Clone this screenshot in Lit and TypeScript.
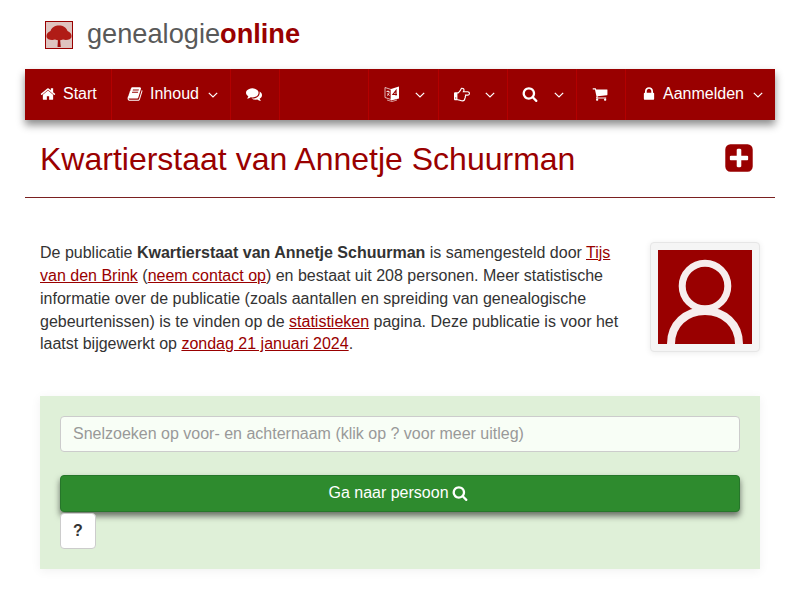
import { LitElement, html, css } from "lit";
import { customElement } from "lit/decorators.js";

const P = {
  home: "M1472 992v480q0 26-19 45t-45 19h-384v-384h-256v384h-384q-26 0-45-19t-19-45v-480q0-1 .5-3t.5-3l575-474 575 474q1 2 1 6zm223-69l-62 74q-8 9-21 11h-3q-13 0-21-7l-692-577-692 577q-12 8-24 7-13-2-21-11l-62-74q-8-10-7-23.5t11-21.5l719-599q32-26 76-26t76 26l244 204v-195q0-14 9-23t23-9h192q14 0 23 9t9 23v408l219 182q10 8 11 21.5t-7 23.5z",
  search: "M1216 832q0-185-131.500-316.500t-316.500-131.500-316.500 131.500-131.500 316.500 131.500 316.500 316.500 131.500 316.500-131.500 131.500-316.500zm512 832q0 52-38 90t-90 38q-54 0-90-38l-343-342q-179 124-399 124-143 0-273.500-55.500t-225-150-150-225-55.500-273.500 55.500-273.500 150-225 225-150 273.500-55.500 273.500 55.500 225 150 150 225 55.500 273.500q0 220-124 399l343 343q37 37 37 90z",
  lock: "M640 768h512v-192q0-106-75-181t-181-75-181 75-75 181v192zm832 96v576q0 40-28 68t-68 28h-960q-40 0-68-28t-28-68v-576q0-40 28-68t68-28h32v-192q0-184 132-316t316-132 316 132 132 316v192h32q40 0 68 28t28 68z",
  cart: "M704 1536q0 52-38 90t-90 38-90-38-38-90 38-90 90-38 90 38 38 90zm896 0q0 52-38 90t-90 38-90-38-38-90 38-90 90-38 90 38 38 90zm128-1088v512q0 24-16.500 42.500t-40.500 21.500l-1044 122q13 60 13 70 0 16-24 64h920q26 0 45 19t19 45-19 45-45 19h-1024q-26 0-45-19t-19-45q0-11 8-31.500t16-36 21.500-40 15.500-29.500l-177-823h-204q-26 0-45-19t-19-45 19-45 45-19h256q16 0 28.500 6.500t19.500 15.500 13 24.500 8 26 5.500 29.500 4.500 26h1201q26 0 45 19t19 45z",
  comments: "M1408 768q0 139-94 257t-256.500 186.500-353.500 68.500q-86 0-176-16-124 88-278 128-36 9-86 16h-3q-11 0-20.500-8t-11.500-21q-1-3-1-6.500t.5-6.500 2-6l2.500-5 3.500-5.500 4-5 4.500-5 4-4.500q5-6 23-25t26-29.500 22.500-29 25-38.500 20.500-44q-124-72-195-177t-71-224q0-139 94-257t256.500-186.500 353.500-68.500 353.500 68.500 256.500 186.500 94 257zm384 256q0 120-71 224.500t-195 176.500q10 24 20.500 44t25 38.500 22.500 29 26 29.500 23 25q1 1 4 4.500t4.500 5 4 5 3.500 5.500l2.500 5 2 6 .5 6.500-1 6.500q-3 14-13 22t-22 7q-50-7-86-16-154-40-278-128-90 16-176 16-271 0-472-132 58 4 88 4 161 0 309-45t264-129q125-92 192-212t67-254q0-77-23-152 129 71 204 178t75 230z",
  book: "M1703 478q40 57 18 129l-275 906q-19 64-76.500 107.500t-122.500 43.500h-923q-77 0-148.500-53.500t-99.500-131.500q-24-67-2-127 0-4 3-27t4-37q1-8-3-21.500t-3-19.500q2-11 8-21t16.500-23.500 16.500-23.500q23-38 45-91.500t30-91.500q3-10 .5-30t-.5-28q3-11 17-28t17-23q21-36 42-92t25-90q1-9-2.500-32t.5-28q4-13 22-30.500t22-22.500q19-26 42.500-84.500t27.500-96.500q1-8-3-25.500t-2-26.500q2-8 9-18t18-23 17-21q8-12 16.500-30.500t15-35 16-36 19.500-32 26.500-23.500 36-11.500 47.500 5.500l-1 3q38-9 51-9h761q74 0 114 56t18 130l-274 906q-36 119-71.500 153.500t-128.500 34.500h-869q-27 0-38 15-11 16-1 43 24 70 144 70h923q29 0 56-15.500t35-41.500l300-987q7-22 5-57 38 15 59 43zm-1064 2q-4 13 2 22.500t20 9.500h608q13 0 25.500-9.500t16.500-22.500l21-64q4-13-2-22.500t-20-9.500h-608q-13 0-25.500 9.500t-16.500 22.500zm-83 256q-4 13 2 22.500t20 9.500h608q13 0 25.500-9.500t16.500-22.500l21-64q4-13-2-22.500t-20-9.500h-608q-13 0-25.500 9.500t-16.500 22.500z",
  hand: "M256 1344q0-26-19-45t-45-19-45 19-19 45 19 45 45 19 45-19 19-45zm1408-512q0-51-39-89.500t-89-38.500h-576q0-20 15-48.500t33-55 33-68 15-84.500q0-67-44.500-97.500t-115.500-30.500q-24 0-90 139-24 44-37 65-40 64-112 145-71 81-101 106-69 57-140 57h-32v640h32q72 0 167 32t193.500 64 179.500 32q189 0 189-167 0-26-5-56 30-16 47.500-52.500t17.500-73.500-18-69q53-50 53-119 0-25-10-55.500t-25-47.500h331q52 0 90-38t38-90zm128-1q0 105-76 181t-181 76h-169q-4 62-37 119 3 21 3 43 0 101-60 178 1 139-85 219.500t-227 80.500q-133 0-322-69-164-59-223-59h-288q-53 0-90.500-37.500t-37.500-90.500v-640q0-53 37.500-90.500t90.500-37.500h288q10 0 21.500-4.500t23.500-14 22.500-18 24-22.500 20.500-21.500 19-21.500 14-17q65-74 100-129 13-21 33-62t37-72 40.500-63 55-49.500 69.500-17.500q125 0 206.500 67t81.500 189q0 68-22 128h374q104 0 180 76t76 179z",
  plus: "M1408 960v-128q0-26-19-45t-45-19h-320v-320q0-26-19-45t-45-19h-128q-26 0-45 19t-19 45v320h-320q-26 0-45 19t-19 45v128q0 26 19 45t45 19h320v320q0 26 19 45t45 19h128q26 0 45-19t19-45v-320h320q26 0 45-19t19-45zm256-544v960q0 119-84.500 203.500t-203.500 84.500h-960q-119 0-203.500-84.500t-84.500-203.500v-960q0-119 84.500-203.500t203.500-84.500h960q119 0 203.500 84.500t84.500 203.500z",
};

const fa = (d: string, size: number, cls = "") => html`<svg class="fa ${cls}" width=${size} height=${size} viewBox="0 0 1792 1792" fill="currentColor"><path d=${d}></path></svg>`;
const chev = (cls = "") => html`<svg class="chev ${cls}" width="10" height="6" viewBox="0 0 10 6" fill="none" stroke="currentColor" stroke-width="1.2"><path d="M.8.8 5 5 9.200.8"></path></svg>`;

@customElement("app-root")
export class AppRoot extends LitElement {
  static styles = css`
    :host { display: block; width: 800px; height: 600px; overflow: hidden; background: #fff;
      font-family: "Liberation Sans", Arial, sans-serif; font-size: 16px; line-height: 22.857px; color: #333; }
    a { color: #990000; }
    .wrap { padding: 0 25px; }
    .brand { height: 69px; display: flex; align-items: center; padding-left: 20px; box-sizing: border-box; }
    .logo { width: 26px; height: 26px; border: 1px solid #990000; display: block; flex: none; }
    .brandtext { margin: -2px 0 0 14px; font-size: 27.2px; line-height: 32px; color: #595959; }
    .brandtext b { color: #990000; }
    nav { height: 51px; background: #990000; display: flex; color: #fff; box-shadow: 0 5px 8px rgba(0,0,0,.45); }
    .it { display: flex; align-items: center; box-sizing: border-box; padding-left: 15px; border-right: 1px solid #b30000; gap: 7px; white-space: nowrap; }
    .it.last { border-right: none; }
    .w87 { width: 87px; } .w119 { width: 119px; } .w49 { width: 49px; } .w70 { width: 70px; } .w69 { width: 69px; } .w149 { width: 149px; }
    .spacer { flex: 1; border-right: 1px solid #b30000; }
    .fa { display: block; flex: none; }
    .it .fa { margin-top: -2px; }
    .it .lock { margin: -2px -1px 0 0; }
    .it .find { margin-left: -1px; margin-right: 1px; }
    .chev { display: block; flex: none; margin-left: 2px; }
    .chev.far { margin-left: 8px; }
    .titlebar { height: 77px; padding: 0 15px; display: flex; align-items: center; justify-content: space-between; border-bottom: 1px solid #7a2020; }
    h1 { margin: 0; font-size: 32px; line-height: 40px; font-weight: 400; color: #990000; }
    .plus { color: #990000; margin-right: 5px; margin-top: -2px; }
    .intro { display: flex; padding: 44px 15px 0; gap: 26px; height: 198px; box-sizing: border-box; }
    .intro p { margin: 0; flex: 1; }
    .thumb { flex: none; width: 94px; height: 94px; padding: 7px; background: #f5f5f5; border: 1px solid #e6e6e6; border-radius: 4px; box-shadow: 0 1px 6px rgba(0,0,0,.08); align-self: flex-start; }
    .thumb svg { display: block; }
    .search { margin: 0 15px; height: 173px; box-sizing: border-box; padding: 20px; background: #dff0d8; box-shadow: 0 2px 10px rgba(0,0,0,.06); }
    .input { height: 36px; box-sizing: border-box; border: 1px solid #ccc; border-radius: 4px; background: #f8fef6; color: #999; padding: 0 12px; display: flex; align-items: center; }
    .go { margin-top: 23px; height: 37px; background: #2e8b2e; border: 1px solid #26762a; box-sizing: border-box; border-radius: 4px; color: #fff; display: flex; align-items: center; justify-content: center; gap: 3px; padding-right: 4px; box-shadow: 0 4px 6px rgba(0,0,0,.55); }
    .go .fa { margin-top: -2px; }
    .q { margin-top: 1px; width: 36px; height: 36px; box-sizing: border-box; background: #fff; border: 1px solid #ccc; border-radius: 4px; display: flex; align-items: center; justify-content: center; font-weight: 700; }
  `;

  render() {
    return html`<div class="wrap">
      <div class="brand">
        <svg class="logo" viewBox="0 0 26 26">
          <defs><filter id="b" x="-10%" y="-10%" width="120%" height="120%"><feGaussianBlur stdDeviation=".7"></feGaussianBlur></filter></defs>
          <rect width="26" height="26" fill="#dfc4c0"></rect>
          <g filter="url(#b)">
            <path d="M11.500 25l.5-8h2l.8 8z" fill="#a01010"></path>
            <path d="M.5 15c-.5-3 1.500-5 4-6C5.500 5.500 9 3.500 13 3.500S20.500 5.500 21.500 9c2.500 1 4.500 3 4 6-.5 2.500-5 3.500-8.500 2.500-2 1-6 1-8 0-3.500 1-8 0-8.500-2.500z" fill="#b01a14"></path>
          </g>
        </svg>
        <div class="brandtext">genealogie<b>online</b></div>
      </div>
      <nav>
        <div class="it w87">${fa(P.home, 16)}<span>Start</span></div>
        <div class="it w119">${fa(P.book, 16)}<span>Inhoud</span>${chev()}</div>
        <div class="it w49">${fa(P.comments, 16)}</div>
        <div class="spacer"></div>
        <div class="it w70">
          <svg class="fa" width="16" height="16" viewBox="0 0 16 16">
            <path d="M1 1.500l6 2v10l-6-2z" fill="none" stroke="#fff" stroke-opacity=".7"></path>
            <path d="M7 3l8-2.500v12l-8 2z" fill="#fff"></path>
            <path d="M3 14l5 1.500 5-1.500" fill="none" stroke="#fff" stroke-opacity=".6"></path>
            <path d="M12 9.500V4.500L9 8.500h4" fill="none" stroke="#990000" stroke-width="1.200"></path>
            <path d="M2.500 5.500h3M4 4.500V6M3 9.500c1.500-.5 2-2 2.200-3.500M3.500 7.500c.5 1 1 1.500 2 2" fill="none" stroke="#fff" stroke-width=".8"></path>
          </svg>
          ${chev("far")}
        </div>
        <div class="it w69">${fa(P.hand, 16)}${chev("far")}</div>
        <div class="it w69">${fa(P.search, 16, "find")}${chev("far")}</div>
        <div class="it w49">${fa(P.cart, 16)}</div>
        <div class="it last w149">${fa(P.lock, 16, "lock")}<span>Aanmelden</span>${chev()}</div>
      </nav>
      <div class="titlebar">
        <h1>Kwartierstaat van Annetje Schuurman</h1>
        <div class="plus">${fa(P.plus, 32)}</div>
      </div>
      <div class="intro">
        <p>De publicatie <b>Kwartierstaat van Annetje Schuurman</b> is samengesteld door <a href="#">Tijs van den Brink</a> (<a href="#">neem contact op</a>) en bestaat uit 208 personen. Meer statistische informatie over de publicatie (zoals aantallen en spreiding van genealogische gebeurtenissen) is te vinden op de <a href="#">statistieken</a> pagina. Deze publicatie is voor het laatst bijgewerkt op <a href="#">zondag 21 januari 2024</a>.</p>
        <div class="thumb">
          <svg width="94" height="94" viewBox="0 0 94 94">
            <rect width="94" height="94" fill="#990000"></rect>
            <circle cx="47" cy="36" r="22.800" fill="none" stroke="#f7eded" stroke-width="7"></circle>
            <path d="M13 94C13 74 28 61 47 61S81 74 81 94" fill="none" stroke="#f7eded" stroke-width="8"></path>
          </svg>
        </div>
      </div>
      <div class="search">
        <div class="input">Snelzoeken op voor- en achternaam (klik op ? voor meer uitleg)</div>
        <div class="go"><span>Ga naar persoon</span>${fa(P.search, 16)}</div>
        <div class="q">?</div>
      </div>
    </div>`;
  }
}
